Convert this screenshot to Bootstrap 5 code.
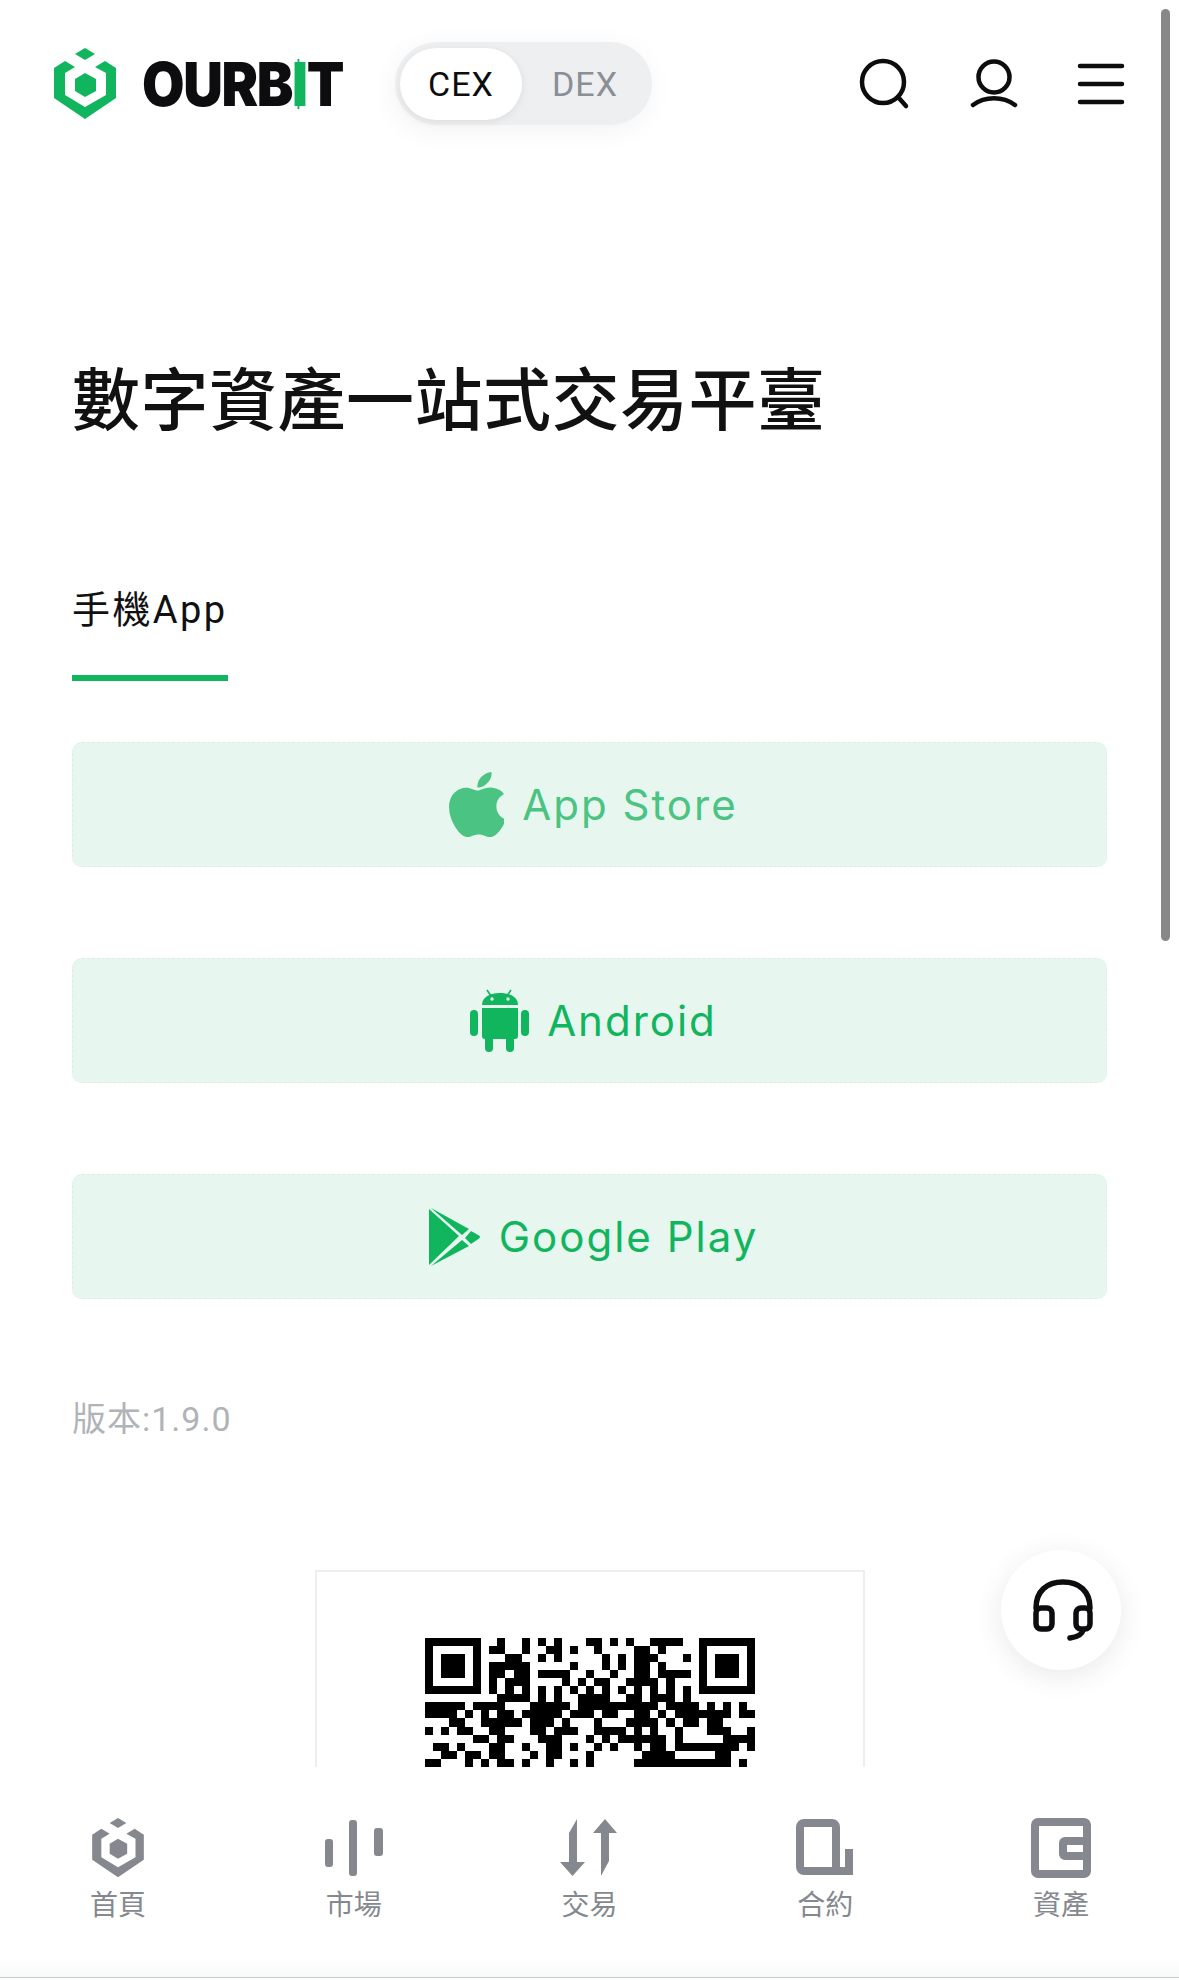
<!DOCTYPE html>
<html lang="zh-Hant">
<head>
  <meta charset="UTF-8" />
  <meta name="viewport" content="width=device-width, initial-scale=1.0" />
  <title>OURBIT App</title>
  <link href="https://cdn.jsdelivr.net/npm/bootstrap@5.3.0/dist/css/bootstrap.min.css" rel="stylesheet" />
  <style>
    html, body {
      height: 100%;
      overflow: hidden;
    }
    body {
      font-family: Roboto, "Noto Sans CJK TC", sans-serif;
      background: #fff;
      color: #111;
    }
    .page-wrap {
      height: 1980px;
    }
    /* header */
    .top-bar {
      height: 167px;
      padding: 0 54px 0 54px;
    }
    .brand-name {
      font-family: Inter, Roboto, sans-serif;
      font-weight: 900;
      font-size: 60px;
      line-height: 60px;
      letter-spacing: -1.5px;
      color: #0d0d0f;
      margin-left: 26px;
      transform: scaleX(0.915);
      transform-origin: left center;
      width: 198px;
      white-space: nowrap;
    }
    .brand-i {
      color: #10b55e;
      position: relative;
      display: inline-block;
    }
    .brand-i::after {
      content: "";
      position: absolute;
      left: calc(50% - 2px);
      top: 5px;
      bottom: 5px;
      width: 2px;
      background: #10b55e;
    }
    .cex-switch {
      width: 257px;
      height: 83px;
      background: #eeeff1;
      border-radius: 42px;
      padding: 6px 5px;
      margin-left: 55px;
      box-shadow: -2px 6px 28px rgba(0, 0, 0, 0.05);
    }
    .cex-on, .cex-off {
      width: 122px;
      height: 72px;
      border-radius: 36px;
      font-size: 34px;
      line-height: 72px;
      letter-spacing: 1px;
      text-align: center;
    }
    .cex-on {
      background: #fff;
      color: #0d0d0f;
      box-shadow: 0 2px 8px rgba(0, 0, 0, 0.08);
    }
    .cex-off {
      color: #8a8e96;
      margin-left: 2px;
    }
    .top-icons {
      gap: 59px;
    }
    /* main */
    .main-area {
      padding: 0 72px;
      min-height: 0;
    }
    .hero-title {
      font-family: "Noto Sans CJK TC", sans-serif;
      font-size: 68px;
      line-height: 68px;
      letter-spacing: 0.5px;
      font-weight: 500;
      color: #111;
      margin: 195px 0 0;
      white-space: nowrap;
    }
    .app-tab {
      display: inline-block;
      font-size: 38px;
      line-height: 40px;
      letter-spacing: 2.4px;
      padding: 0 1px 45px 0;
      border-bottom: 6px solid #10b55e;
      margin-top: 160px;
      color: #111;
    }
    .dl-list {
      gap: 91px;
      margin-top: 61px;
    }
    .dl-btn {
      height: 125px;
      gap: 18px;
      padding-left: 8px;
      padding-right: 0;
      background: #e7f7ef;
      border: 1px dashed #dcefe5;
      border-radius: 10px;
      color: #10b55e;
      font-family: Inter, Roboto, sans-serif;
      font-size: 42px;
      letter-spacing: 2px;
    }
    .dl-btn:hover {
      background: #e7f7ef;
      color: #10b55e;
    }
    .dl-faded {
      color: #4ac383;
    }
    .dl-faded:hover {
      color: #4ac383;
    }
    .version-line {
      font-size: 34px;
      line-height: 40px;
      letter-spacing: 1px;
      color: #b0b3b8;
      margin-top: 100px;
    }
    .qr-box {
      width: 550px;
      height: 400px;
      border: 2px solid #eee;
      margin: 131px auto 0;
      padding-top: 66px;
    }
    /* things lying over the page */
    .help-btn {
      position: absolute;
      left: 1001px;
      top: 1550px;
      width: 120px;
      height: 120px;
      border-radius: 50%;
      background: #fff;
      box-shadow: 0 6px 30px rgba(0, 0, 0, 0.09);
    }
    .fake-scroll {
      position: absolute;
      left: 1161px;
      top: 9px;
      width: 9px;
      height: 932px;
      border-radius: 5px;
      background: #888;
    }
    /* bottom tabs */
    .tab-bar {
      height: 213px;
      background: #fff;
      padding-top: 51px;
    }
    .tab-item {
      color: #85898f;
      font-size: 28px;
      line-height: 32px;
    }
    .tab-icon {
      height: 60px;
      margin-bottom: 12px;
    }
    .tab-strip {
      height: 18px;
      margin-top: auto;
      margin-bottom: 2px;
      background: linear-gradient(#fff, #f7f8f9);
      border-bottom: 1px solid #c9cacc;
    }
  </style>
</head>
<body>
  <svg width="0" height="0" class="position-absolute">
    <symbol id="logo-mark" viewBox="0 0 62 72">
      <path d="M31 0L41 6L31 12L21 6Z" />
      <path d="M21 19L11 13L0 20V50L31 71L62 50V20L51 13L41 19L52 25V47L31 59L11 47V25Z" />
      <path d="M31 25L42 31V43L31 49L21 43V31Z" />
    </symbol>
  </svg>

  <div class="page-wrap d-flex flex-column">
    <!-- Header -->
    <header class="top-bar d-flex align-items-center flex-shrink-0">
      <svg width="62" height="72" fill="#10b55e"><use href="#logo-mark" /></svg>
      <div class="brand-name">OURB<span class="brand-i">I</span>T</div>
      <div class="cex-switch d-flex">
        <div class="cex-on">CEX</div>
        <div class="cex-off">DEX</div>
      </div>
      <div class="top-icons d-flex align-items-center ms-auto">
        <svg width="52" height="52" viewBox="0 0 52 52" fill="none" stroke="#0d0d0f" stroke-width="4.5" stroke-linecap="round">
          <circle cx="24" cy="24" r="21" />
          <path d="M39 39L47 48" />
        </svg>
        <svg width="48" height="50" viewBox="0 0 48 50" fill="none" stroke="#0d0d0f" stroke-width="4.5" stroke-linecap="round">
          <circle cx="24" cy="18" r="15.5" />
          <path d="M3 46C15 37 33 37 45 46" />
        </svg>
        <svg width="48" height="42" viewBox="0 0 48 42" fill="none" stroke="#0d0d0f" stroke-width="4.5" stroke-linecap="round">
          <path d="M3 3H45M3 21H45M3 39H45" />
        </svg>
      </div>
    </header>

    <!-- Main -->
    <main class="main-area flex-grow-1 overflow-hidden">
      <h1 class="hero-title">數字資產一站式交易平臺</h1>
      <div class="app-tab">手機App</div>

      <div class="dl-list d-grid">
        <a href="#" class="dl-btn dl-faded btn d-flex align-items-center justify-content-center">
          <svg width="55" height="65" viewBox="4 32 365 448" preserveAspectRatio="none" fill="#4ac383">
            <path d="M318.7 268.7c-.2-36.7 16.4-64.4 50-84.8-18.8-26.9-47.2-41.7-84.7-44.6-35.5-2.8-74.3 20.7-88.5 20.7-15 0-49.4-19.7-76.4-19.7C63.3 141.2 4 184.8 4 273.5q0 39.3 14.4 81.2c12.8 36.7 59 126.7 107.2 125.2 25.2-.6 43-17.9 75.8-17.9 31.8 0 48.3 17.9 76.4 17.9 48.6-.7 90.4-82.5 102.6-119.3-65.2-30.7-61.7-90-61.7-91.9zm-56.6-164.2c27.3-32.4 24.8-61.9 24-72.5-24.1 1.4-52 16.4-67.9 34.9-17.5 19.8-27.8 44.3-25.6 71.9 26.1 2 49.9-11.4 69.5-34.3z" />
          </svg>
          App Store
        </a>
        <a href="#" class="dl-btn btn d-flex align-items-center justify-content-center">
          <svg width="59" height="63" viewBox="0 0 59 63" fill="#10b55e">
            <rect x="0" y="21" width="8" height="26" rx="4" />
            <rect x="51" y="21" width="8" height="26" rx="4" />
            <path d="M12 19H48V47a3 3 0 0 1-3 3H15a3 3 0 0 1-3-3Z" />
            <rect x="15" y="45" width="8" height="18" rx="4" />
            <rect x="36" y="45" width="8" height="18" rx="4" />
            <path d="M12 16C12 8 20 4 30 4S48 8 48 16Z" />
            <path d="M17 1L21 7M41 1L37 7" stroke="#10b55e" stroke-width="1.6" />
            <circle cx="22" cy="10" r="1.7" fill="#e7f7ef" />
            <circle cx="38" cy="10" r="1.7" fill="#e7f7ef" />
          </svg>
          Android
        </a>
        <a href="#" class="dl-btn btn d-flex align-items-center justify-content-center">
          <svg width="52" height="58" viewBox="0 0 52 58" fill="#10b55e">
            <path d="M0 1V57L30 28Z" />
            <path d="M2 0L40 21L33 27Z" />
            <path d="M2 58L33 32L40 38Z" />
            <path d="M42 23L50 27.500Q52 29 50 30.500L42 36L36 30Z" />
          </svg>
          Google Play
        </a>
      </div>

      <div class="version-line">版本:1.9.0</div>

      <div class="qr-box">
        <svg id="qrCode" class="d-block mx-auto" width="330" height="330" viewBox="0 0 41 41" shape-rendering="crispEdges"></svg>
      </div>
    </main>

    <!-- Bottom tabs -->
    <nav class="tab-bar d-flex flex-column flex-shrink-0">
      <div class="row g-0 text-center">
        <div class="col tab-item">
          <div class="tab-icon d-flex justify-content-center">
            <svg width="52" height="60" fill="#85898f"><use href="#logo-mark" /></svg>
          </div>
          首頁
        </div>
        <div class="col tab-item">
          <div class="tab-icon d-flex justify-content-center">
            <svg width="58" height="60" viewBox="0 0 58 60" fill="#85898f">
              <rect x="0" y="21" width="8" height="28" rx="3" />
              <rect x="24" y="2" width="8" height="56" rx="3" />
              <rect x="49" y="10" width="9" height="28" rx="3" />
            </svg>
          </div>
          市場
        </div>
        <div class="col tab-item">
          <div class="tab-icon d-flex justify-content-center">
            <svg width="58" height="60" viewBox="0 0 58 60" fill="#85898f">
              <path d="M17 1V44H25L12.500 58L0 44H9V15Z" />
              <path d="M41 58V15H33L45 1L57 15H49V43Z" />
            </svg>
          </div>
          交易
        </div>
        <div class="col tab-item">
          <div class="tab-icon d-flex justify-content-center">
            <svg width="58" height="60" viewBox="0 0 58 60" fill="none" stroke="#85898f" stroke-width="8">
              <path d="M41 53H8A4 4 0 0 1 4 49V9A4 4 0 0 1 8 5H36A4 4 0 0 1 40 9V53H53V31" />
            </svg>
          </div>
          合約
        </div>
        <div class="col tab-item">
          <div class="tab-icon d-flex justify-content-center">
            <svg width="60" height="60" viewBox="0 0 60 60" fill="none" stroke="#85898f" stroke-width="8">
              <path d="M7 4H53A3 3 0 0 1 56 7V53A3 3 0 0 1 53 56H7A3 3 0 0 1 4 53V7A3 3 0 0 1 7 4Z" />
              <path d="M56 23H34A2 2 0 0 0 32 25V36A2 2 0 0 0 34 38H56" />
            </svg>
          </div>
          資產
        </div>
      </div>
      <div class="tab-strip"></div>
    </nav>
  </div>

  <!-- Floating help button -->
  <button type="button" class="help-btn btn p-0 border-0 d-flex align-items-center justify-content-center" aria-label="help">
    <svg class="ms-1" width="64" height="64" viewBox="0 0 64 64" fill="none" stroke="#0d0d0f" stroke-width="5.5" stroke-linecap="round">
      <path d="M5 30C5 13 16 4 32 4S59 13 59 30" />
      <rect x="5" y="30" width="16" height="21" rx="5" />
      <rect x="45" y="30" width="14" height="21" rx="5" />
      <path d="M52 52C51 57 46 59 39 60" />
    </svg>
  </button>

  <div class="fake-scroll"></div>

  <script>
  // QR modules copied row by row from the picture: [from, to] columns
  const qrRows = [
    [[9,9],[12,12],[14,14],[16,16],[20,21],[23,23],[25,25],[28,31]],
    [[8,9],[12,12],[15,16],[18,18],[21,21],[26,27],[29,29]],
    [[10,11],[14,14],[16,16],[22,22],[24,24],[26,28],[32,32]],
    [[8,12],[18,18],[22,22],[24,24],[26,27],[29,29]],
    [[8,9],[11,12],[14,17],[20,20],[23,23],[26,27],[29,32]],
    [[8,8],[10,12],[17,17],[19,19],[21,22],[25,28],[30,30]],
    [[8,8],[10,10],[12,12],[14,14],[16,16],[18,18],[20,20],[22,22],[24,24],[26,26],[28,28],[30,30],[32,32]],
    [[9,12],[14,14],[16,16],[19,22],[25,26],[28,30],[32,32]],
    [[0,4],[6,9],[13,17],[19,21],[22,28],[30,33],[35,35],[37,37],[39,39]],
    [[0,3],[5,5],[7,7],[9,10],[12,16],[18,20],[22,23],[26,27],[29,29],[31,33],[34,37],[39,40]],
    [[3,4],[7,11],[13,15],[17,17],[21,21],[25,28],[30,30],[32,33],[35,36]],
    [[0,0],[2,2],[4,5],[8,9],[13,14],[16,18],[21,24],[26,26],[28,28],[31,31],[35,37],[40,40]],
    [[6,7],[9,10],[14,16],[20,20],[22,22],[24,27],[28,29],[31,31],[37,39],[40,40]],
    [[1,2],[4,4],[8,9],[12,12],[15,16],[18,18],[21,21],[23,23],[26,26],[28,29],[31,33],[34,38],[40,40]],
    [[2,3],[5,6],[8,9],[13,13],[15,16],[20,20],[27,30],[36,37]],
    [[0,1],[5,5],[7,7],[9,10],[12,12],[15,15],[18,18],[20,20],[26,30],[31,33],[34,36],[37,37],[39,39]]
  ];

  function drawFinder(x) {
    return `<path d="M${x} 0h7v7h-7zM${x + 1} 1v5h5v-5z" fill-rule="evenodd"/><rect x="${x + 2}" y="2" width="3" height="3"/>`;
  }

  let qrHtml = drawFinder(0) + drawFinder(34);
  qrRows.forEach((runs, y) => {
    runs.forEach(([from, to]) => {
      qrHtml += `<rect x="${from}" y="${y}" width="${to - from + 1}" height="1"/>`;
    });
  });
  document.getElementById('qrCode').innerHTML = qrHtml;
  </script>
  <script src="https://cdn.jsdelivr.net/npm/bootstrap@5.3.0/dist/js/bootstrap.bundle.min.js"></script>
</body>
</html>
